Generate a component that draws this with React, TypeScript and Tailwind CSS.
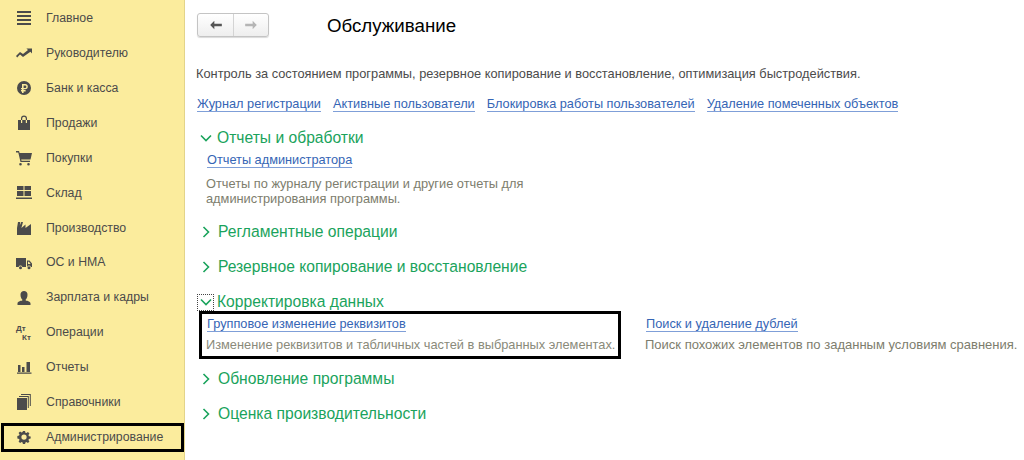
const F = "font-['Liberation_Sans',Arial,sans-serif]";

const icons: Record<string, React.ReactNode> = {
  menu: <path d="M1 1h14v2H1zM1 5h14v2H1zM1 9h14v2H1zM1 13h14v2H1z" />,
  trend: <path d="M0 11l4-4 3 2L12 5l-1.600-1.400H16V8.400l-1.600-1.600L7 12 4 9.600 1.200 12.400z" />,
  ruble: <path fillRule="evenodd" d="M8 1a7 7 0 1 0 0 14A7 7 0 0 0 8 1zM6 4h3.200a2.600 2.600 0 0 1 0 5.200H7.600v.9h2v1.300h-2V13H6v-1.600H5v-1.300h1v-.9H5V7.900h1zm1.600 1.400v2.500h1.500a1.250 1.250 0 0 0 0-2.500z" />,
  bag: <path fillRule="evenodd" d="M2 5h3V3.500a3 3 0 0 1 6 0V5h3v10H2zM6.200 5h3.600V3.500a1.800 1.800 0 0 0-3.600 0zM5 5v3h1.200V5zm4.800 0v3H11V5z" />,
  cart: <path d="M0 1h3l.6 2H16l-1.500 6.500H5.200l.3 1.300H14V12H4.500L2.300 2.400H0zM4.500 13a1.300 1.300 0 1 0 0 2.600 1.300 1.300 0 0 0 0-2.600zM12.500 13a1.300 1.300 0 1 0 0 2.600 1.300 1.300 0 0 0 0-2.600z" />,
  grid: <path d="M1 1h6.500v4H1zM8.500 1H15v4H8.500zM1 6h6.500v5H1zM8.500 6H15v5H8.500zM0 12.500h16V14H0z" />,
  factory: <path d="M1 15V8l1-6h2.200L3.800 5.500 5.200 2H7L5.400 8 9.500 4.500V8L15 4v11z" />,
  truck: <path fillRule="evenodd" d="M0 3h10v9H6.400a2 2 0 0 0-3.800 0H0zM11 5.500h2.500L16 8.500V12h-1.100a2 2 0 0 0-3.800 0H11zM12 6.700V9h2.600l-1.600-2.300zM4.500 11.300a1.500 1.500 0 1 0 0 3 1.500 1.500 0 0 0 0-3zM13 11.300a1.500 1.500 0 1 0 0 3 1.500 1.500 0 0 0 0-3z" />,
  user: <path d="M8 1a3.500 3.500 0 0 0-3.500 3.700C4.500 7 5.500 9 6.300 9.600v1C4.500 11 1.500 11.700 1.500 13.500V15h13v-1.500c0-1.800-3-2.500-4.800-2.900v-1c.8-.6 1.800-2.600 1.800-4.900A3.500 3.500 0 0 0 8 1z" />,
  chart: <path d="M2 6h2.500v7H2zM6 8h2.500v5H6zM10.500 3H14v10h-3.500zM1 13.500h14.500v1.200H1z" />,
  books: <path fillRule="evenodd" d="M1 4h10v12H1zM11.800 3H3V2h9.800v12h-1zM13.800 1H5V0h9.800v12h-1z" />,
  gear: <path fillRule="evenodd" d="M6.800 1h2.400l.4 2 1.200.5 1.700-1.100 1.700 1.700-1.100 1.700.5 1.200 2 .4v2.400l-2 .4-.5 1.200 1.100 1.700-1.700 1.700-1.700-1.100-1.200.5-.4 2H6.800l-.4-2-1.200-.5-1.700 1.100-1.700-1.700 1.100-1.700-.5-1.200-2-.4V6.800l2-.4.5-1.200-1.100-1.700 1.700-1.700 1.700 1.100 1.200-.5zM8 5a3 3 0 1 0 0 6 3 3 0 0 0 0-6z" />,
};

const menu: [string, string][] = [
  ["menu", "Главное"],
  ["trend", "Руководителю"],
  ["ruble", "Банк и касса"],
  ["bag", "Продажи"],
  ["cart", "Покупки"],
  ["grid", "Склад"],
  ["factory", "Производство"],
  ["truck", "ОС и НМА"],
  ["user", "Зарплата и кадры"],
  ["dtkt", "Операции"],
  ["chart", "Отчеты"],
  ["books", "Справочники"],
];

function MenuIcon({ name, small }: { name: string; small?: boolean }) {
  if (name === "dtkt") {
    return (
      <span className="flex h-4 w-4 shrink-0 flex-col text-[8px] font-bold leading-[9px] text-[#4b4b4b]">
        <span>Дт</span>
        <span className="pl-[6px]">Кт</span>
      </span>
    );
  }
  return (
    <svg viewBox="0 0 16 16" className={small ? "h-[14px] w-[14px] shrink-0" : "h-4 w-4 shrink-0"} fill="#4b4b4b">
      {icons[name]}
    </svg>
  );
}

function Row({ icon, label }: { icon: string; label: string }) {
  return (
    <div className="flex h-[34.9px] items-center pl-[16px] text-[12.3px] text-[#4b4b4b]">
      <MenuIcon name={icon} />
      <span className="ml-[14px]">{label}</span>
    </div>
  );
}

function Chevron({ open }: { open?: boolean }) {
  return (
    <svg viewBox="0 0 12 12" className="h-3 w-3 shrink-0" fill="none" stroke="#1aa35c" strokeWidth="1.6">
      {open ? <path d="M1 3.500l5 5 5-5" /> : <path d="M3.500 1l5 5-5 5" />}
    </svg>
  );
}

function Section({ title, focus, open }: { title: string; focus?: boolean; open?: boolean }) {
  return (
    <div className="flex h-[20px] items-center text-[15.65px] leading-[20px] text-[#1aa35c]">
      <span
        className={
          focus
            ? "flex h-[17px] w-[17px] items-center justify-center border border-dotted border-[#444]"
            : open
              ? "ml-[3px] flex w-[14px] items-center"
              : "ml-[3px] flex w-[15px] items-center"
        }
      >
        <Chevron open={open} />
      </span>
      <span className="ml-[3px]">{title}</span>
    </div>
  );
}

function Link({ children }: { children: React.ReactNode }) {
  return (
    <a className="border-b border-[#7f9fd8] text-[12.75px] leading-[14px] text-[#3565b5]">{children}</a>
  );
}

export default function App() {
  return (
    <div className={`${F} flex h-[460px] w-[1024px] overflow-hidden bg-white`}>
      <aside className="h-full w-[185px] shrink-0 border-r border-[#e3d48a] bg-[#fbec9d] pt-[1px]">
        {menu.map(([i, l]) => (
          <Row key={l} icon={i} label={l} />
        ))}
        <div className="mx-[1px] mt-[3px] flex h-[29px] w-[183px] items-center border-[3px] border-black pl-[13px] text-[12.3px] text-[#4b4b4b]">
          <MenuIcon name="gear" small />
          <span className="ml-[15px]">Администрирование</span>
        </div>
      </aside>
      <main className="min-w-0 flex-1 pl-[12px]">
        <div className="flex items-center pt-[12px]">
          <div className="flex h-[24px] w-[72px] overflow-hidden rounded-[3px] border border-[#c4c4c4] bg-gradient-to-b from-white to-[#eeeeee] shadow-[0_1px_1px_rgba(0,0,0,0.15)]">
            <span className="flex w-[36px] items-center justify-center border-r border-[#d4d4d4]">
              <svg viewBox="0 0 14 12" className="h-[10px] w-[14px]" fill="#555">
                <path d="M0 6l5-5v3.500h9v3H5V11z" />
              </svg>
            </span>
            <span className="flex flex-1 items-center justify-center">
              <svg viewBox="0 0 14 12" className="h-[10px] w-[14px]" fill="#b5b5b5">
                <path d="M14 6L9 1v3.500H0v3h9V11z" />
              </svg>
            </span>
          </div>
          <h1 className="ml-[58px] mt-[2px] text-[18.7px] leading-[23px] text-black">Обслуживание</h1>
        </div>
        <p className="-ml-[1px] mt-[30px] whitespace-nowrap text-[12.8px] leading-[14px] text-[#4b4b4b]">
          Контроль за состоянием программы, резервное копирование и восстановление, оптимизация быстродействия.
        </p>
        <div className="mt-[16px] flex gap-[12px] whitespace-nowrap">
          <Link>Журнал регистрации</Link>
          <Link>Активные пользователи</Link>
          <Link>Блокировка работы пользователей</Link>
          <Link>Удаление помеченных объектов</Link>
        </div>
        <div className="mt-[16px]">
          <Section title="Отчеты и обработки" open />
          <div className="ml-[10px] mt-[5px] flex">
            <Link>Отчеты администратора</Link>
          </div>
          <p className="ml-[9px] mt-[8px] w-[340px] text-[12.8px] leading-[15px] text-[#7d7d6d]">
            Отчеты по журналу регистрации и другие отчеты для администрирования программы.
          </p>
        </div>
        <div className="mt-[16px]"><Section title="Регламентные операции" /></div>
        <div className="mt-[15px]"><Section title="Резервное копирование и восстановление" /></div>
        <div className="mt-[15px]"><Section title="Корректировка данных" focus open /></div>
        <div className="-mt-[1px] flex">
          <div className="ml-[2px] h-[48px] w-[422px] whitespace-nowrap border-[3px] border-black pl-[5px] pt-[3px]">
            <div className="flex"><Link>Групповое изменение реквизитов</Link></div>
            <p className="-ml-[1px] mt-[6px] text-[12.8px] leading-[14px] text-[#8a8a7a]">
              Изменение реквизитов и табличных частей в выбранных элементах.
            </p>
          </div>
          <div className="ml-[25px] whitespace-nowrap pt-[6px]">
            <div className="flex"><Link>Поиск и удаление дублей</Link></div>
            <p className="-ml-[1px] mt-[6px] text-[13px] leading-[14px] text-[#7d7d6d]">
              Поиск похожих элементов по заданным условиям сравнения.
            </p>
          </div>
        </div>
        <div className="mt-[10px]"><Section title="Обновление программы" /></div>
        <div className="mt-[15px]"><Section title="Оценка производительности" /></div>
      </main>
    </div>
  );
}
